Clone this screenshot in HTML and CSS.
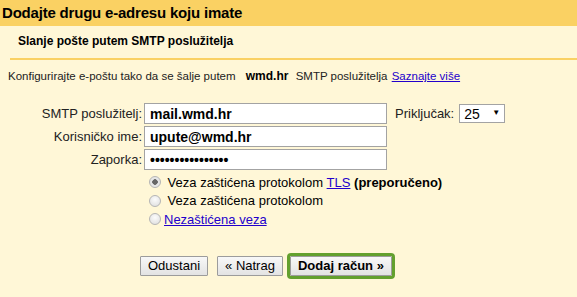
FILE: index.html
```html
<!DOCTYPE html>
<html lang="hr">

<head>
    <meta charset="UTF-8">
    <title>Dodajte drugu e-adresu</title>
    <link rel="stylesheet" href="styles.css">
</head>

<body>
    <div class="title-bar">Dodajte drugu e-adresu koju imate</div>
    <div class="content">
        <div class="subtitle">Slanje pošte putem SMTP poslužitelja</div>
        <p class="intro">
            Konfigurirajte e-poštu tako da se šalje putem
            <b class="domain">wmd.hr</b>
            SMTP poslužitelja
            <a href="#">Saznajte više</a>
        </p>

        <!--smtp settings-->
        <div class="form-grid">
            <label class="field-label" for="server">SMTP poslužitelj:</label>
            <input class="field" id="server" type="text" value="mail.wmd.hr">
            <label class="port-label" for="port">Priključak:</label>
            <span class="select-wrap">
                <select id="port" class="port">
                    <option>25</option>
                    <option>465</option>
                    <option>587</option>
                </select>
            </span>

            <label class="field-label" for="user">Korisničko ime:</label>
            <input class="field" id="user" type="text" value="upute@wmd.hr">
            <span></span>
            <span></span>

            <label class="field-label" for="pass">Zaporka:</label>
            <input class="field" id="pass" type="password" value="wmdlozinka123456">
        </div>

        <!--security options-->
        <div class="radios">
            <label class="radio-row"><input type="radio" name="sec" checked> Veza zaštićena protokolom <a href="#">TLS</a>&nbsp;<b>(preporučeno)</b></label>
            <label class="radio-row"><input type="radio" name="sec"> Veza zaštićena protokolom</label>
            <label class="radio-row"><input type="radio" name="sec"> <a href="#">Nezaštićena veza</a></label>
        </div>

        <div class="buttons">
            <button class="btn">Odustani</button>
            <button class="btn btn-back">« Natrag</button>
            <button class="btn btn-main">Dodaj račun »</button>
        </div>
    </div>
</body>

</html>
```

FILE: styles.css
```css
body {
    margin: 0;
    min-height: 100vh;
    background: #fff7d7;
    font-family: "Liberation Sans", Arial, sans-serif;
    color: #000;
}

a {
    color: #2200cc;
}

.title-bar {
    height: 26px;
    box-sizing: border-box;
    padding: 4px 0 0 2px;
    background: #fad163;
    font-size: 15px;
    font-weight: bold;
    letter-spacing: -0.2px;
    line-height: 18px;
}

.subtitle {
    margin-left: 10px;
    padding: 8px 0 9px 8px;
    border-bottom: 2px solid #fad163;
    font-size: 12px;
    font-weight: bold;
    line-height: 15px;
}

.intro {
    margin: 9px 0 0 8px;
    font-size: 11.5px;
    line-height: 14px;
    color: #222;
}

.intro .domain {
    margin: 0 4px 0 7px;
    color: #000;
    font-size: 12px;
}

.intro a {
    margin-left: 1px;
}

/* form */
.form-grid {
    display: grid;
    grid-template-columns: 142px 245px max-content max-content;
    grid-auto-rows: 21px;
    row-gap: 2px;
    align-items: center;
    justify-items: start;
    justify-content: start;
    margin-top: 20px;
}

.field-label {
    justify-self: end;
    font-size: 13px;
    color: #222;
}

.field {
    width: 243px;
    height: 21px;
    margin: 0 0 0 2px;
    padding: 0 5px;
    box-sizing: border-box;
    border: 1px solid #a3a3a3;
    background: #fff;
    font-family: inherit;
    font-size: 14px;
    font-weight: bold;
    color: #000;
    outline: none;
}

.port-label {
    margin-left: 8px;
    font-size: 13px;
    color: #222;
}

.select-wrap {
    position: relative;
    margin-left: 5px;
    display: inline-block;
}

.port {
    appearance: none;
    width: 46px;
    height: 19px;
    padding: 0 0 0 4px;
    border: 1px solid #a3a3a3;
    border-radius: 0;
    background: #fff;
    font-family: inherit;
    font-size: 14px;
    color: #000;
    display: block;
}

.select-wrap::after {
    content: "▼";
    position: absolute;
    right: 5px;
    top: 4px;
    font-size: 8px;
    pointer-events: none;
}

/* radios */
.radios {
    margin: 3px 0 0 149px;
    font-size: 13px;
}

.radio-row {
    display: flex;
    align-items: center;
    height: 18.5px;
    white-space: pre;
}

.radio-row input {
    appearance: none;
    width: 12px;
    height: 12px;
    margin: 0 3px 0 0;
    border: 1px solid #b5b5b5;
    border-radius: 50%;
    background: radial-gradient(circle at 50% 35%, #fcfcfc, #dcdcdc);
    box-sizing: border-box;
}

.radio-row input:checked {
    background: radial-gradient(circle, #666 0 2.5px, #e6e6e6 3px);
}

/* buttons */
.buttons {
    display: flex;
    margin: 27px 0 0 140px;
}

.btn {
    height: 20px;
    padding: 0 7px;
    border: 1px solid #9c9c9c;
    border-radius: 1px;
    background: linear-gradient(#f8f8f8, #e3e3e3);
    font-family: inherit;
    font-size: 13px;
    color: #000;
    line-height: 18px;
}

.btn-back {
    margin-left: 9px;
}

.btn-main {
    margin-left: 7px;
    font-weight: bold;
    outline: 3px solid #63a02e;
}
```
